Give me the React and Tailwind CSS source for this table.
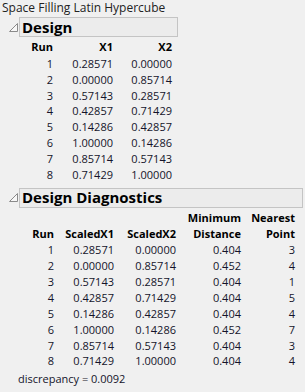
import React from "react";

const design = [
  [1, "0.28571", "0.00000"],
  [2, "0.00000", "0.85714"],
  [3, "0.57143", "0.28571"],
  [4, "0.42857", "0.71429"],
  [5, "0.14286", "0.42857"],
  [6, "1.00000", "0.14286"],
  [7, "0.85714", "0.57143"],
  [8, "0.71429", "1.00000"],
];

const diag = [
  ["0.404", 3],
  ["0.452", 4],
  ["0.404", 1],
  ["0.404", 5],
  ["0.404", 4],
  ["0.452", 7],
  ["0.404", 3],
  ["0.404", 4],
];

function Disclosure() {
  return (
    <svg width="11" height="11" viewBox="0 0 11 11" className="shrink-0">
      <path d="M1.5 9.5 L9.5 9.5 L9.5 1.5 Z" fill="#f7f7f7" stroke="#8a8a8a" strokeWidth="1" />
    </svg>
  );
}

function Outline({ title, width }) {
  return (
    <div className="flex items-center pl-[8px]">
      <Disclosure />
      <div
        className={`${width} h-[20px] border border-[#c4c4c4] bg-[#ececec] flex items-center pl-[2px] text-[15px] font-bold text-black leading-none`}
      >
        {title}
      </div>
    </div>
  );
}

export default function App() {
  return (
    <div
      className="w-[305px] h-[392px] bg-[#f0f0f0] text-[#14142a] overflow-hidden"
      style={{ fontFamily: '"Open Sans", "Noto Sans", sans-serif' }}
    >
      <div className="pl-[2px] h-[16px] text-[12px] leading-[16px] text-[#222]">
        Space Filling Latin Hypercube
      </div>
      <div className="mt-[1px]">
        <Outline title="Design" width="w-[159px]" />
      </div>
      <div className="mt-[2px] grid grid-cols-[53px_60px_59px] text-right text-[11px] leading-[15.86px]">
        <div className="font-bold text-black pb-[1px]">Run</div>
        <div className="font-bold text-black pb-[1px]">X1</div>
        <div className="font-bold text-black pb-[1px]">X2</div>
        {design.map((r) => (
          <React.Fragment key={r[0]}>
            <div>{r[0]}</div>
            <div>{r[1]}</div>
            <div>{r[2]}</div>
          </React.Fragment>
        ))}
      </div>
      <div className="mt-[5px]">
        <Outline title="Design Diagnostics" width="w-[284px]" />
      </div>
      <div className="mt-[2px] grid grid-cols-[54px_60px_62px_65px_54px] text-right text-[11px] leading-[15.86px]">
        <div />
        <div />
        <div />
        <div className="font-bold text-black">Minimum</div>
        <div className="font-bold text-black">Nearest</div>
        <div className="font-bold text-black pb-[1px]">Run</div>
        <div className="font-bold text-black pb-[1px]">ScaledX1</div>
        <div className="font-bold text-black pb-[1px]">ScaledX2</div>
        <div className="font-bold text-black pb-[1px]">Distance</div>
        <div className="font-bold text-black pb-[1px]">Point</div>
        {design.map((r, i) => (
          <React.Fragment key={r[0]}>
            <div>{r[0]}</div>
            <div>{r[1]}</div>
            <div>{r[2]}</div>
            <div>{diag[i][0]}</div>
            <div>{diag[i][1]}</div>
          </React.Fragment>
        ))}
      </div>
      <div className="pl-[18px] mt-[2px] text-[11px] leading-[15px]">discrepancy = 0.0092</div>
    </div>
  );
}
